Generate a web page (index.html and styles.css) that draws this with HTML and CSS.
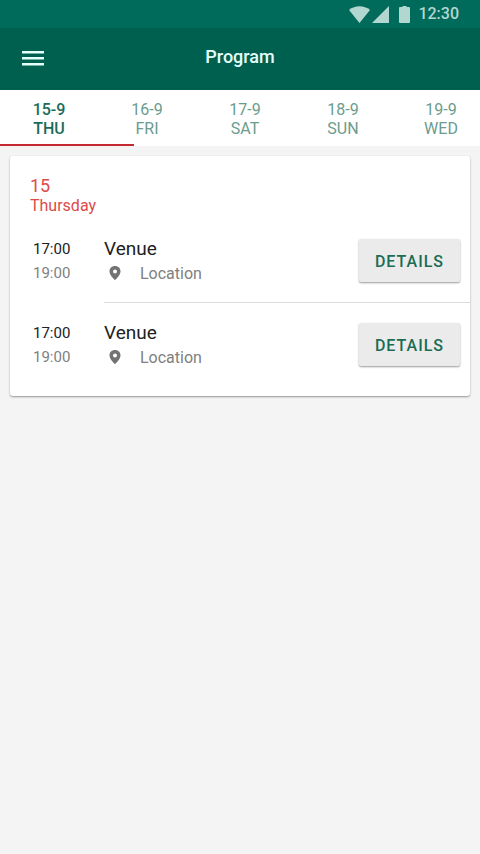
FILE: index.html
```html
<!DOCTYPE html>
<html lang="en">
<head>
<meta charset="utf-8">
<meta name="viewport" content="width=device-width, initial-scale=1">
<title>Program</title>
<link rel="stylesheet" href="styles.css">
</head>
<body>
<div class="status">
  <svg class="wifi" width="21" height="17" viewBox="0 0 21 17" aria-hidden="true"><path d="M0 4C6-1 15-1 21 4L10.500 17Z"/></svg>
  <svg class="signal" width="17" height="17" viewBox="0 0 17 17" aria-hidden="true"><path d="M17 0V17H0Z"/></svg>
  <svg class="battery" width="11" height="17" viewBox="0 0 11 17" aria-hidden="true"><path d="M3.500 0H7.500V1H10Q11 1 11 2V16Q11 17 10 17H1Q0 17 0 16V2Q0 1 1 1H3.500Z"/></svg>
  <span class="clock">12:30</span>
</div>
<header class="appbar">
  <button class="menu" type="button" aria-label="Menu">
    <svg width="22" height="15" viewBox="0 0 22 15" aria-hidden="true"><path d="M0 0H22V2.500H0ZM0 6H22V8.500H0ZM0 12H22V14.500H0Z"/></svg>
  </button>
  <h1 class="title">Program</h1>
</header>
<nav class="tabs">
  <a class="tab active" href="#thu">15-9<br>THU</a>
  <a class="tab" href="#fri">16-9<br>FRI</a>
  <a class="tab" href="#sat">17-9<br>SAT</a>
  <a class="tab" href="#sun">18-9<br>SUN</a>
  <a class="tab" href="#wed">19-9<br>WED</a>
</nav>
<main class="card" id="thu">
  <h2 class="date"><span class="day">15</span><span class="weekday">Thursday</span></h2>
  <section class="event">
    <div class="times"><time>17:00</time><time class="end">19:00</time></div>
    <div class="body">
      <div class="info">
        <h3 class="venue">Venue</h3>
        <p class="location"><svg width="12" height="16" viewBox="0 0 12 16" aria-hidden="true"><path fill-rule="evenodd" d="M6 0C2.600 0 .5 2.400.5 5.400C.5 9.300 6 14 6 14S11.500 9.300 11.500 5.400C11.500 2.400 9.400 0 6 0ZM6 3.400A2 2 0 1 1 6 7.400A2 2 0 1 1 6 3.400Z"/></svg>Location</p>
      </div>
      <button class="details" type="button">DETAILS</button>
    </div>
  </section>
  <section class="event">
    <div class="times"><time>17:00</time><time class="end">19:00</time></div>
    <div class="body">
      <div class="info">
        <h3 class="venue">Venue</h3>
        <p class="location"><svg width="12" height="16" viewBox="0 0 12 16" aria-hidden="true"><path fill-rule="evenodd" d="M6 0C2.600 0 .5 2.400.5 5.400C.5 9.300 6 14 6 14S11.500 9.300 11.500 5.400C11.500 2.400 9.400 0 6 0ZM6 3.400A2 2 0 1 1 6 7.400A2 2 0 1 1 6 3.400Z"/></svg>Location</p>
      </div>
      <button class="details" type="button">DETAILS</button>
    </div>
  </section>
</main>
</body>
</html>
```
FILE: styles.css
```css
* { box-sizing: border-box; }
body {
  margin: 0;
  background: #f4f4f4;
  color: #212121;
  font-family: Roboto, "Liberation Sans", sans-serif;
  font-size: 16px;
}
h1, h2, h3, p { margin: 0; font-weight: 400; }
button { border: 0; font: inherit; cursor: pointer; }
svg { display: block; }

.status {
  display: flex;
  align-items: center;
  justify-content: flex-end;
  height: 28px;
  padding-right: 21px;
  background: #006b5b;
  color: #b2d6d0;
  fill: #b2d6d0;
}
.signal { margin-left: 2px; }
.battery { margin: 0 8px 0 10px; }
.clock { font-size: 16px; font-weight: 500; line-height: 28px; }

.appbar {
  display: grid;
  grid-template-columns: 66px 1fr 66px;
  align-items: center;
  height: 62px;
  padding-bottom: 6px;
  background: #006050;
  color: #e6fffa;
}
.menu {
  display: grid;
  place-items: center;
  height: 48px;
  padding: 4px 0 0;
  background: none;
  fill: #e6fffa;
}
.title { font-size: 18px; font-weight: 500; text-align: center; }

.tabs {
  position: relative;
  display: flex;
  height: 56px;
  padding-top: 10px;
  overflow: hidden;
  background: #fff;
}
.tabs::after {
  content: "";
  position: absolute;
  left: 0;
  bottom: 0;
  width: 28%;
  height: 2px;
  background: #c6282f;
}
.tab {
  flex: 0 0 98px;
  color: #6b9c8e;
  font-weight: 400;
  line-height: 19px;
  text-align: center;
  text-decoration: none;
}
.tab.active { color: #1b6b59; font-weight: 500; }

.card {
  margin: 10px;
  padding-bottom: 9px;
  border-radius: 3px;
  background: #fff;
  box-shadow: 0 1px 2px rgba(0, 0, 0, .4);
}
.date {
  display: flex;
  flex-direction: column;
  padding: 19px 20px 3px;
  color: #dd4a4a;
}
.day { font-size: 18px; line-height: 21px; }
.weekday { font-size: 16px; line-height: 20px; }

.event { display: flex; }
.times {
  display: flex;
  flex-direction: column;
  width: 94px;
  padding: 18px 0 0 23px;
  font-size: 15px;
  line-height: 24px;
}
.end { color: #808080; }
.body {
  display: flex;
  flex: 1;
  justify-content: space-between;
  align-items: flex-start;
  height: 84px;
  padding: 18px 10px 0 0;
}
.event:not(:last-child) .body { border-bottom: 1px solid #dcdcdc; }
.venue { font-size: 19px; line-height: 24px; }
.location {
  display: flex;
  align-items: center;
  gap: 19px;
  padding-left: 5px;
  color: #808080;
  line-height: 26px;
  fill: #737373;
}
.details {
  height: 43px;
  margin-top: 2px;
  padding: 2px 16px 0;
  border-radius: 2px;
  background: #ebebeb;
  box-shadow: 0 1px 2px rgba(0, 0, 0, .4);
  color: #1b6b55;
  font-weight: 500;
  letter-spacing: 1px;
}
```
